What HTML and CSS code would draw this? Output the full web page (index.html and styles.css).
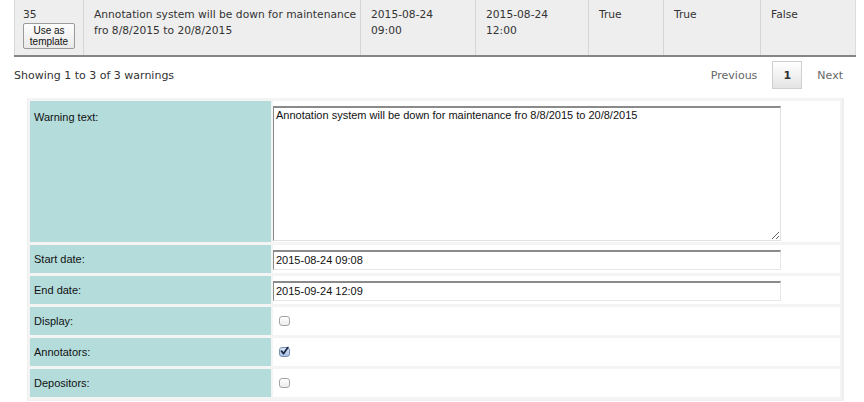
FILE: index.html
```html
<!DOCTYPE html>
<html>
<head>
<meta charset="utf-8">
<link rel="stylesheet" href="styles.css">
</head>
<body>
<div class="wrap">
  <table class="warnings">
    <colgroup>
      <col class="c1"><col class="c2"><col class="c3"><col class="c4"><col class="c5"><col class="c6"><col class="c7">
    </colgroup>
    <tr>
      <td>35<br><button class="tpl">Use as<br>template</button></td>
      <td class="msg">Annotation system will be down for maintenance<br>fro 8/8/2015 to 20/8/2015</td>
      <td>2015-08-24<br>09:00</td>
      <td>2015-08-24<br>12:00</td>
      <td>True</td>
      <td>True</td>
      <td>False</td>
    </tr>
  </table>
  <div class="footer">
    <div class="info">Showing 1 to 3 of 3 warnings</div>
    <div class="pager">
      <span class="plink">Previous</span>
      <span class="pcur">1</span>
      <span class="plink">Next</span>
    </div>
  </div>
  <div class="panel">
    <table class="form">
      <tr class="tall">
        <th>Warning text:</th>
        <td><textarea class="ta">Annotation system will be down for maintenance fro 8/8/2015 to 20/8/2015</textarea></td>
      </tr>
      <tr>
        <th>Start date:</th>
        <td><input class="inp" type="text" value="2015-08-24 09:08"></td>
      </tr>
      <tr>
        <th>End date:</th>
        <td><input class="inp" type="text" value="2015-09-24 12:09"></td>
      </tr>
      <tr>
        <th>Display:</th>
        <td><span class="cb"></span></td>
      </tr>
      <tr>
        <th>Annotators:</th>
        <td><span class="cb checked"><svg width="11" height="10" viewBox="0 0 11 10"><path d="M2.5 5.2 L4.6 7.6 L8.8 1.6" fill="none" stroke="#1c2a4a" stroke-width="1.8" stroke-linecap="round" stroke-linejoin="round"/></svg></span></td>
      </tr>
      <tr>
        <th>Depositors:</th>
        <td><span class="cb"></span></td>
      </tr>
    </table>
  </div>
</div>
</body>
</html>
```

FILE: styles.css
```css
html, body {
  margin: 0;
  padding: 0;
  background: #fff;
}
.wrap {
  margin-left: 14px;
  width: 841px;
  font-family: "DejaVu Sans", Verdana, sans-serif;
  font-size: 11px;
  color: #333;
}
.warnings {
  width: 841px;
  table-layout: fixed;
  border-collapse: collapse;
  background: #eeeeee;
  border-left: 1px solid #dcdcdc;
  border-right: 1px solid #dcdcdc;
  border-bottom: 2px solid #858585;
}
.c1 { width: 69px; }
.c2 { width: 277px; }
.c3 { width: 115px; }
.c4 { width: 113px; }
.c5 { width: 75px; }
.c6 { width: 97px; }
.c7 { width: 95px; }
.warnings td {
  vertical-align: top;
  padding: 7px 2px 6px 10px;
  line-height: 16px;
  border-left: 1px solid #d6d6d6;
  height: 42px;
  font-size: 10.7px;
}
.warnings td.msg {
  white-space: nowrap;
  overflow: hidden;
}
.warnings td:first-child {
  padding-left: 8px;
}
.tpl {
  display: block;
  margin: 0;
  width: 52px;
  height: 26px;
  padding: 0;
  font-family: "Liberation Sans", Arial, sans-serif;
  font-size: 10px;
  line-height: 11px;
  color: #111;
  border: 1px solid #9a9a9a;
  border-radius: 2px;
  background: linear-gradient(#fdfdfd, #e9e9e9);
}
.footer {
  display: flex;
  justify-content: space-between;
  align-items: center;
  height: 36px;
}
.pager {
  display: flex;
  align-items: center;
  gap: 15px;
  padding-right: 12px;
}
.plink {
  color: #666;
}
.pcur {
  box-sizing: border-box;
  width: 30px;
  height: 28px;
  display: flex;
  align-items: center;
  justify-content: center;
  border: 1px solid #cfcfcf;
  background: linear-gradient(#ffffff, #e4e4e4);
  color: #333;
  font-weight: bold;
}
.panel {
  margin-top: 5px;
  margin-left: 13px;
  width: 817px;
  box-sizing: border-box;
  background: #efefef;
  padding: 0 2px 1px 1px;
}
.form {
  width: 100%;
  border-spacing: 2px 3px;
  background: #f4f4f4;
  font-family: "Liberation Sans", Arial, sans-serif;
  font-size: 11px;
  color: #111;
}
.form th {
  width: 237px;
  background: #b4dcdb;
  text-align: left;
  font-weight: normal;
  padding: 0 0 0 4px;
  height: 28px;
  vertical-align: middle;
}
.form td {
  background: #fff;
  padding: 0;
  height: 28px;
  vertical-align: middle;
}
.form tr.tall th {
  height: 141px;
  vertical-align: top;
  padding-top: 10px;
  box-sizing: border-box;
}
.form tr.tall td {
  vertical-align: top;
}
.ta {
  display: block;
  box-sizing: border-box;
  width: 508px;
  height: 135px;
  margin: 5px 0 0 0;
  padding: 1px 2px;
  font-family: "Liberation Sans", Arial, sans-serif;
  font-size: 11px;
  color: #111;
  border: 1px solid #e2e2e2;
  border-top: 2px solid #8a8a8a;
  border-left: 1px solid #8a8a8a;
  background: #fff;
  resize: both;
}
.inp {
  display: block;
  box-sizing: border-box;
  width: 508px;
  height: 20px;
  margin: 1px 0 0 0;
  padding: 0 2px;
  font-family: "Liberation Sans", Arial, sans-serif;
  font-size: 11px;
  color: #111;
  border: 1px solid #e6e6e6;
  border-top: 2px solid #8a8a8a;
  border-left: 1px solid #8a8a8a;
  background: #fff;
  outline: none;
}
.cb {
  display: block;
  box-sizing: border-box;
  width: 11px;
  height: 10px;
  margin-left: 6px;
  border: 1px solid #a4a4a4;
  border-radius: 3px;
  background: linear-gradient(#ffffff, #ececec);
  position: relative;
}
.cb.checked {
  border-color: #7d8fb0;
  background: linear-gradient(#dbe6f6, #a9c0e4);
}
.cb svg {
  position: absolute;
  left: -1px;
  top: -2px;
}
```
